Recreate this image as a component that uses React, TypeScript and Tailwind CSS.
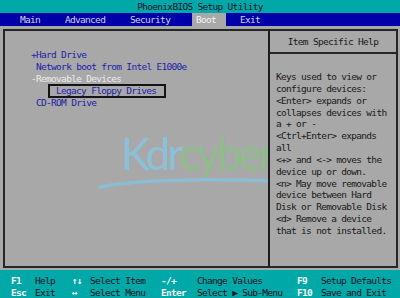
const mono = "font-['DejaVu_Sans_Mono','Liberation_Mono',monospace] text-[9.5px] tracking-[-0.7px]";

const helpLines = [
  'Keys used to view or',
  'configure devices:',
  '<Enter> expands or',
  'collapses devices with',
  'a + or -',
  '<Ctrl+Enter> expands',
  'all',
  '<+> and <-> moves the',
  'device up or down.',
  '<n> May move removable',
  'device between Hard',
  'Disk or Removable Disk',
  '<d> Remove a device',
  'that is not installed.',
];

const footer = [
  [
    ['F1', 'Help'],
    ['↑↓', 'Select Item'],
    ['-/+', 'Change Values'],
    ['F9', 'Setup Defaults'],
  ],
  [
    ['Esc', 'Exit'],
    ['↔', 'Select Menu'],
    ['Enter', 'Select ▶ Sub-Menu'],
    ['F10', 'Save and Exit'],
  ],
];

// column / key widths for the footer legend
const colCls = ['flex w-[72px] pl-[11px]', 'flex w-[89px]', 'flex w-[136px]', 'flex'];
const keyCls = ['w-[24px]', 'w-[18px]', 'w-[36px]', 'w-[24px]'];

export default function App() {
  return (
    <div className={`w-[400px] h-[298px] overflow-hidden bg-[#a8a8a8] ${mono}`}>
      {/* Title */}
      <div className="h-[13px] bg-[#00a8a8] flex items-center justify-center leading-none text-[#101028]">
        PhoenixBIOS Setup Utility
      </div>

      {/* Menu bar */}
      <div className="h-[13px] bg-[#0000a8] flex items-center leading-none text-[#d4d4e4] pl-[20px]">
        <span className="w-[45px]">Main</span>
        <span className="w-[65px]">Advanced</span>
        <span className="w-[62px]">Security</span>
        <span className="w-[34px] h-full flex items-center pl-[4px] bg-[#a8a8a8] text-[#f4f4f4]">Boot</span>
        <span className="ml-[14px]">Exit</span>
      </div>

      {/* Main area */}
      <div className="h-[244px] pt-[3px] pl-[3px] pr-[2px] pb-[2px]">
        <div className="h-full flex border-2 border-[#262626]">
          {/* Left panel */}
          <div className="relative w-[263px] overflow-hidden pt-[18px] pl-[26px] leading-[11.9px] text-[#1c1ca8] whitespace-pre">
            <div className="absolute left-[116px] top-[100px] font-['Lato',sans-serif] font-normal text-[44px] leading-none tracking-[-3px]">
              <span className="text-[#8cc0d8]">Kdr</span>
              <span className="text-[#90bc8c]">cyber</span>
            </div>
            <svg className="absolute left-0 top-0" width="263" height="240">
              <path d="M95 156 Q 150 146 267 150" fill="none" stroke="#8cbcd4" strokeWidth="3.5" strokeLinecap="round" />
            </svg>
            <div className="relative">
              <div>+Hard Drive</div>
              <div> Network boot from Intel E1000e</div>
              <div className="text-[#ececec]">-Removable Devices</div>
              <div className="ml-[17px] w-[118px] h-[14px] -my-[1px] border-2 border-[#141414] pl-[6px] flex items-center leading-none">
                Legacy Floppy Drives
              </div>
              <div> CD-ROM Drive</div>
            </div>
          </div>

          {/* Right panel */}
          <div className="flex-1 border-l-2 border-[#1c1c1c] text-[#181818]">
            <div className="h-[23px] flex items-center justify-center border-b-2 border-[#262626] leading-none">
              Item Specific Help
            </div>
            <div className="pt-[17px] pl-[6px] leading-[11.85px] whitespace-pre">
              {helpLines.map((l, i) => (
                <div key={i}>{l}</div>
              ))}
            </div>
          </div>
        </div>
      </div>

      {/* Footer */}
      <div className="h-[28px] bg-[#00a8a8] pt-[5px] leading-[11.7px] whitespace-pre">
        {footer.map((row, r) => (
          <div key={r} className="flex">
            {row.map(([k, d], i) => (
              <div key={i} className={colCls[i]}>
                <span className={`font-bold text-[#f8f8f8] ${keyCls[i]}`}>{k}</span>
                <span className="text-[#101020]">{d}</span>
              </div>
            ))}
          </div>
        ))}
      </div>
    </div>
  );
}
